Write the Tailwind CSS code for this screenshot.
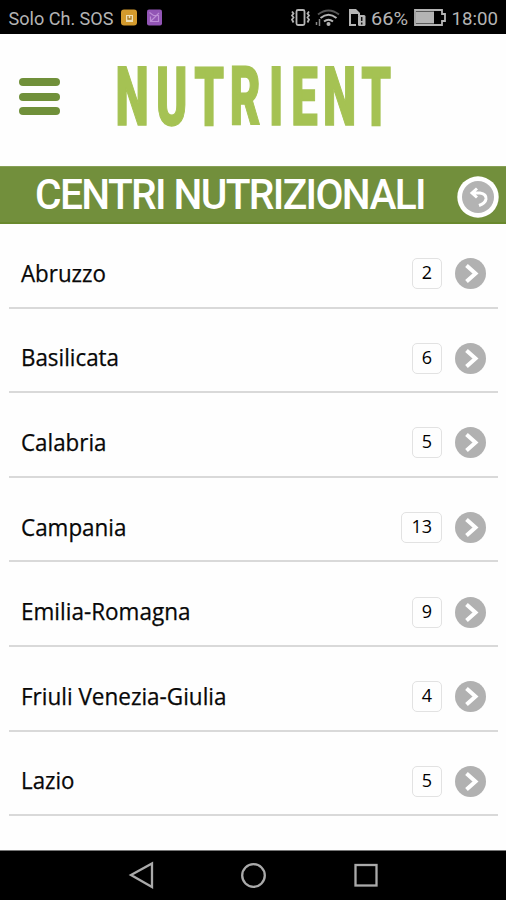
<!DOCTYPE html>
<html lang="it">
<head>
<meta charset="utf-8">
<title>Nutrient</title>
<script src="https://cdn.jsdelivr.net/npm/@tailwindcss/browser@4"></script>
</head>
<body class="w-[506px] h-[900px] overflow-hidden bg-[#fefefe] font-['Open_Sans','Noto_Sans',sans-serif] flex flex-col">
<header class="h-[34px] shrink-0 bg-black">
<svg class="block" width="506" height="34" viewBox="0 0 506 34" font-family="Roboto, sans-serif" font-size="18.5" fill="#b4b4b4">
<text x="8.5" y="24.5" textLength="105" lengthAdjust="spacingAndGlyphs">Solo Ch. SOS</text>
<rect x="121" y="9.5" width="16" height="16" rx="3" fill="#d39a2d"/><path d="M126 15h7v7h-7z" fill="#eee0b8"/><path d="M128 16v3h3v-3" fill="none" stroke="#a9771d" stroke-width="1.3"/>
<rect x="147" y="9.5" width="15" height="16" rx="2" fill="#9255b5"/><path d="M149.500 12.500l4 3h5v6h-8v-5M151 21l8-8" fill="none" stroke="#bd8dd6" stroke-width="1.2"/>
<g fill="none" stroke="#b4b4b4" stroke-width="1.8"><rect x="296.500" y="10" width="8" height="15" rx="1.500"/><path d="M292 11.500l1.500 2-1.500 2 1.500 2-1.500 2 1.500 3M309 11.500l-1.500 2 1.500 2-1.500 2 1.500 2-1.500 3" stroke-width="1.800"/></g>
<g fill="none" stroke="#b4b4b4" stroke-width="2"><path d="M318 14.500q10.500-8 21 0" stroke="#555"/><path d="M320.500 18q8-6.500 16 0M324 21.500q4.500-3.500 9 0"/><path d="M319.500 19v7M316.500 22v3" stroke="#888" stroke-width="1.500"/></g><circle cx="328.500" cy="24" r="2"/>
<path d="M349 9h7l4 4v3h-2v-2h-7v10h5v2h-7z"/><rect x="358" y="15" width="7.500" height="11" rx="1.500"/><path d="M361.700 17v4M361.700 22.500v2" stroke="#111" stroke-width="1.500"/>
<text x="371" y="24.500" textLength="37" lengthAdjust="spacingAndGlyphs">66%</text>
<path d="M415 10h27v4h3v7h-3v4h-27z" fill="none" stroke="#b4b4b4" stroke-width="1.800"/><path d="M416 11.500h18v12h-18z"/>
<text x="451.500" y="24.500" textLength="46.500" lengthAdjust="spacingAndGlyphs">18:00</text>
</svg>
</header>
<section class="h-[132px] shrink-0 flex">
<button class="ml-[19px] mt-[44px] w-[41px] h-[37px] flex flex-col justify-between" aria-label="Menu">
<span class="block w-full h-2 rounded-full bg-[#70903a]"></span><span class="block w-full h-2 rounded-full bg-[#70903a]"></span><span class="block w-full h-2 rounded-full bg-[#70903a]"></span>
</button>
<svg class="ml-[54px] mt-[6px] overflow-visible" width="284" height="116" viewBox="114 40 284 116" fill="#a5c253" stroke="#a5c253" stroke-width="1.5">
<text transform="translate(0 125.300) scale(.58 1)" font-family="Roboto, sans-serif" font-weight="900" font-size="81.500" x="199 269 335 396 464 502 557 623" y="0">NUTRIENT</text>
</svg>
</section>
<section class="h-[58px] shrink-0 bg-[#728f3c] border-t border-b-2 border-t-[#87a056] border-b-[#69892d] flex">
<svg class="ml-[25px] overflow-visible" width="410" height="55" viewBox="25 167 410 55" fill="#fff">
<text x="35" y="208.500" font-family="Roboto, sans-serif" font-weight="500" font-size="42.500" letter-spacing="-1.700" textLength="390" lengthAdjust="spacingAndGlyphs">CENTRI NUTRIZIONALI</text>
</svg>
<svg class="ml-[22px] mt-[9px]" width="42" height="42" viewBox="0 0 42 42"><circle cx="21" cy="21" r="20.700" fill="#fff"/><circle cx="21" cy="21" r="16" fill="#b3b3b3"/><path d="M20 12.500l-5 4.500 5 4.500M15 17h8q6.500 1 6 6-.5 4-7 6.500" fill="none" stroke="#fff" stroke-width="3"/></svg>
</section>
<main class="h-[626px] shrink-0 px-[9px] text-black">
<ul id="list"></ul>
</main>
<footer class="h-[50px] shrink-0 bg-black border-t border-[#777]">
<svg width="506" height="49" viewBox="0 851 506 49" fill="none" stroke="#aaa" stroke-width="2.300"><path d="M152 863.500v23.500l-21-12z"/><circle cx="253.500" cy="875.500" r="11.300"/><rect x="355.500" y="865" width="21" height="20.500"/></svg>
</footer>
<script>
const rows = [['Abruzzo',2,85],['Basilicata',6,98],['Calabria',5,85.5],['Campania',13,105.5],['Emilia-Romagna',9,169.5],['Friuli Venezia-Giulia',4,205.5],['Lazio',5,53.5]];
document.getElementById('list').innerHTML = rows.map(([name, count, width]) => `
<li class="h-[84.6px] w-[489px] border-b-2 border-[#d9d9d9] pt-[17px] pl-[11.5px] pr-3 flex items-center">
<svg class="overflow-visible" width="230" height="32" fill="#080808" stroke="#080808" stroke-width=".25"><text x="0" y="24" font-size="23" textLength="${width}" lengthAdjust="spacingAndGlyphs">${name}</text></svg>
<span class="ml-auto h-[31px] min-w-[30px] px-[9px] rounded-[5px] border-[1.5px] border-[#e2e2e2] text-[18px] leading-[27px] font-medium text-center">${count}</span>
<svg class="ml-[13px]" width="31" height="31" viewBox="0 0 31 31"><circle cx="15.500" cy="15.500" r="15.500" fill="#b1b1b1"/><path d="M11.500 7.500l9 8-9 8" fill="none" stroke="#fff" stroke-width="4"/></svg>
</li>`).join('');
</script>
</body>
</html>
